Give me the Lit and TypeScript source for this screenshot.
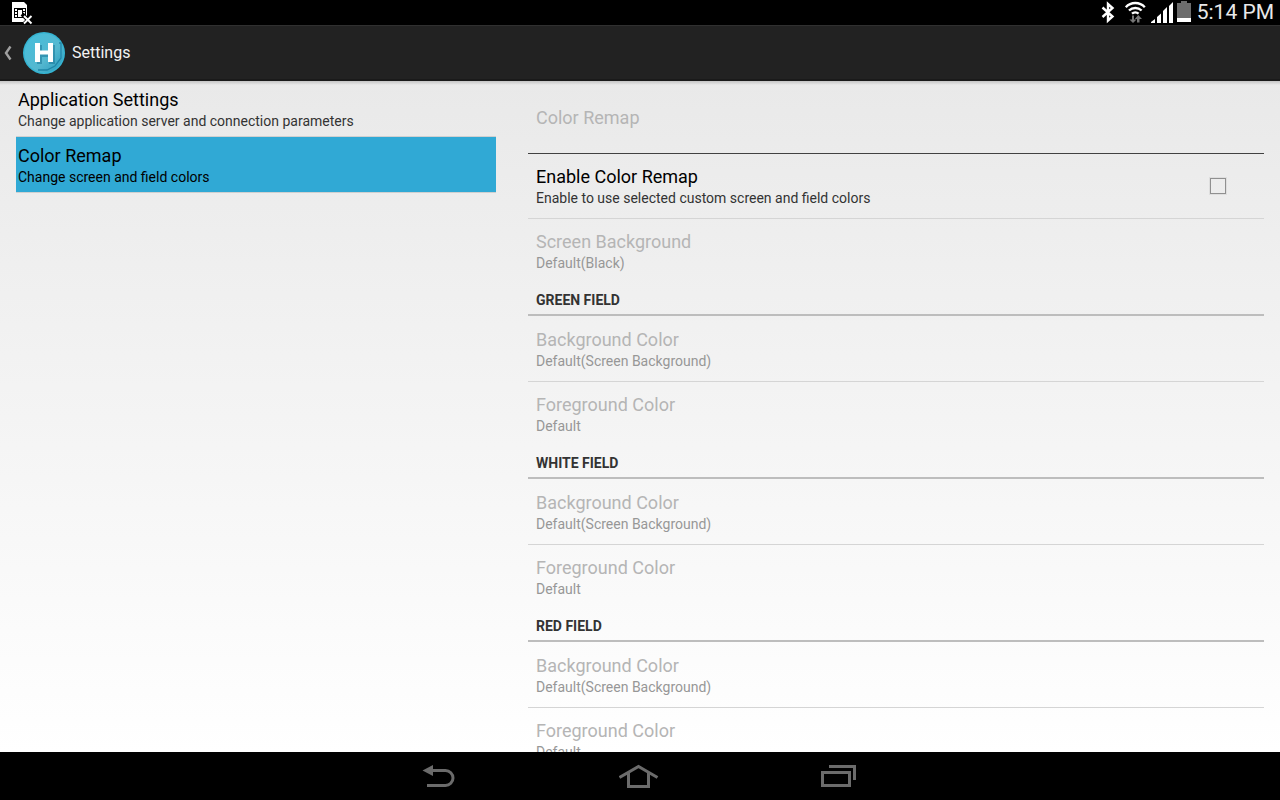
import { LitElement, html, css, svg } from "lit";
import { customElement, property, state } from "lit/decorators.js";
import { classMap } from "lit/directives/class-map.js";

const textStyles = css`
  :host {
    display: block;
    font-family: Roboto, sans-serif;
  }
  * {
    box-sizing: border-box;
  }
  button {
    margin: 0;
    padding: 0;
    border: 0;
    background: none;
    color: inherit;
    font: inherit;
    text-align: left;
  }
  .title {
    display: block;
    font-size: 18px;
    line-height: 22px;
    color: #000;
  }
  .summary {
    display: block;
    font-size: 14px;
    line-height: 20px;
    color: #333;
  }
`;

@customElement("status-bar")
class StatusBar extends LitElement {
  static styles = css`
    :host {
      display: flex;
      align-items: center;
      justify-content: space-between;
      height: 25px;
      padding: 0 6px 0 10px;
      background: #000;
      color: #e8e8e8;
      font-family: Roboto, sans-serif;
    }
    .tray {
      display: flex;
      align-items: center;
    }
    svg {
      display: block;
    }
    .clock {
      margin-left: 5px;
      font-size: 21px;
      line-height: 25px;
    }
  `;

  render() {
    return html`
      <svg width="24" height="25" viewBox="0 0 24 25" aria-label="No SIM card">
        <path d="M2 2h12l3 3v17H2z" fill="#fff" />
        <path d="M4 8h12v10H4z" fill="#000" />
        <path d="M5 9h2v2H5zM5 12h2v2H5zM5 15h2v2H5zM8 10h1v7H8zM11 10h1v7h-1zM9 10h2v7H9zM13 9h2v2h-2zM13 12h2v2h-2z" fill="#fff" />
        <path d="M12 14l11 11M24 14l-11 11" stroke="#000" stroke-width="4" />
        <path d="M14 16l7.500 7.500M21.500 16L14 23.500" stroke="#fff" stroke-width="1.900" />
      </svg>
      <div class="tray">
        <svg width="92" height="25" viewBox="0 0 92 25" aria-label="Bluetooth, Wi-Fi, signal, battery">
          <path d="M2.500 7.500l10 9-4.500 4V4l4.500 4-10 9" fill="none" stroke="#fff" stroke-width="2.400" />
          <g fill="none" stroke="#fff" stroke-width="2.400">
            <path d="M25.800 7.200a13 13 0 0 1 19 0" />
            <path d="M29 10.500a9 9 0 0 1 12.600 0" />
            <path d="M32 13.700a5 5 0 0 1 6.600 0" />
          </g>
          <path d="M32 15.500h2v4h2.500L33 23l-3.500-3.500H32zM37 22.500h2.500V19H42l-3.700-4-3.500 4H37z" fill="#777" />
          <path d="M51 23v-1l4-3v4zM57 23v-6l4-3.500V23zM63 23V11l4-4v16zM69 23V6l4-4v21z" fill="#fff" />
          <path d="M81 1h6v2h4v15H77V3h4z" fill="#6c6c6c" />
          <path d="M77 18h14v4H77z" fill="#fff" />
        </svg>
        <time class="clock">5:14 PM</time>
      </div>
    `;
  }
}

@customElement("action-bar")
class ActionBar extends LitElement {
  static styles = css`
    :host {
      display: block;
      box-sizing: border-box;
      height: 56px;
      background: #222;
      border-top: 1px solid #303030;
      border-bottom: 2px solid #1a1a1a;
      font-family: Roboto, sans-serif;
    }
    .up {
      display: flex;
      align-items: center;
      height: 100%;
      margin: 0;
      padding: 1px 8px 0 4px;
      border: 0;
      background: none;
      color: #f3f3f3;
      font: inherit;
    }
    .logo {
      margin: 0 6px 0 10px;
    }
    .name {
      margin: 0;
      font-size: 16px;
      line-height: 20px;
      font-weight: 400;
    }
  `;

  render() {
    return html`
      <button class="up" type="button">
        <svg width="8" height="16" viewBox="0 0 8 16" aria-hidden="true">
          <path d="M6.500 1.500L2 8l4.500 6.500" fill="none" stroke="#a0a0a0" stroke-width="2.400" />
        </svg>
        <svg class="logo" width="44" height="44" viewBox="0 0 44 44" aria-hidden="true">
          <defs>
            <linearGradient id="face" x1="0" y1="0" x2="1" y2="1">
              <stop offset="0" stop-color="#45bfdc" />
              <stop offset=".6" stop-color="#55b8d0" />
              <stop offset="1" stop-color="#2698bb" />
            </linearGradient>
          </defs>
          <circle cx="22" cy="22" r="21" fill="#35b4d2" />
          <circle cx="22" cy="22" r="19.500" fill="url(#face)" />
          <path d="M37 12h2v15l-6 8-8 4h-9" fill="none" stroke="#1f86a8" stroke-width="1.300" />
          <path d="M15 14h5v7h8v-7h5v19h-6v-7h-7v7h-5z" fill="#1c7798" opacity=".55" />
          <path d="M13 12h5v7.500h8V12h5v19h-5v-7.500h-8V31h-5z" fill="#fff" />
        </svg>
        <h1 class="name">Settings</h1>
      </button>
    `;
  }
}

@customElement("header-item")
class HeaderItem extends LitElement {
  @property() heading = "";
  @property() summary = "";
  @property({ type: Boolean }) active = false;

  static styles = [
    textStyles,
    css`
      .item {
        display: block;
        width: 100%;
        padding: 8px 2px 5px;
        border-bottom: 1px solid #d0d0d0;
      }
      .active {
        background: #30a9d5;
        background-clip: padding-box;
      }
      .active .summary {
        color: #000;
      }
    `,
  ];

  render() {
    return html`
      <button type="button" class=${classMap({ item: true, active: this.active })}>
        <span class="title">${this.heading}</span>
        <span class="summary">${this.summary}</span>
      </button>
    `;
  }
}

@customElement("preference-row")
class PreferenceRow extends LitElement {
  @property() heading = "";
  @property() summary = "";
  @property({ type: Boolean }) disabled = false;
  @property({ type: Boolean }) last = false;
  @property({ type: Boolean }) checkable = false;

  static styles = [
    textStyles,
    css`
      .row {
        display: flex;
        align-items: center;
        justify-content: space-between;
        width: 100%;
        padding: 12px 38px 10px 8px;
        border-bottom: 1px solid #d5d5d5;
      }
      .last {
        border-bottom: 0;
      }
      .disabled .title {
        color: #b5b5b5;
      }
      .disabled .summary {
        color: #979797;
      }
      .box {
        appearance: none;
        width: 16px;
        height: 16px;
        margin: 0 0 2px;
        border: 1px solid #909090;
        box-shadow: 0 0 0 1px #dedede;
      }
      .box:checked {
        background: #30a9d5;
      }
    `,
  ];

  render() {
    const text = html`
      <span>
        <span class="title">${this.heading}</span>
        <span class="summary">${this.summary}</span>
      </span>
    `;
    if (this.checkable) {
      return html`<label class="row">${text}<input class="box" type="checkbox" /></label>`;
    }
    return html`
      <button
        type="button"
        class=${classMap({ row: true, last: this.last, disabled: this.disabled })}
        ?disabled=${this.disabled}
      >
        ${text}
      </button>
    `;
  }
}

@customElement("navigation-bar")
class NavigationBar extends LitElement {
  static styles = css`
    :host {
      display: flex;
      justify-content: center;
      height: 48px;
      padding-right: 2px;
      background: #000;
    }
    button {
      display: flex;
      align-items: center;
      justify-content: center;
      width: 200px;
      padding: 0;
      border: 0;
      background: none;
    }
  `;

  render() {
    const icon = (shape: unknown) => html`
      <svg width="40" height="28" viewBox="0 0 40 28" fill="none" stroke="#6b6b6b" stroke-width="3" aria-hidden="true">
        ${shape}
      </svg>
    `;
    return html`
      <button type="button" aria-label="Back">
        ${icon(svg`
          <path d="M13 8.500h13.500a7.500 7.500 0 0 1 0 15H8" />
          <path d="M3.500 8.500L14 3v11z" fill="#6b6b6b" stroke="none" />
        `)}
      </button>
      <button type="button" aria-label="Home">
        ${icon(svg`<path d="M.5 15.500L19.500 4.500l19 11M9.500 11v13.500h20V11" />`)}
      </button>
      <button type="button" aria-label="Recent apps">
        ${icon(svg`<path d="M3.500 10.500h27v13h-27zM10 4.500h25.500V18" />`)}
      </button>
    `;
  }
}

@customElement("app-root")
class AppRoot extends LitElement {
  @state() private fields = ["Green Field", "White Field", "Red Field"];

  static styles = css`
    :host {
      display: flex;
      flex-direction: column;
      height: 100vh;
      overflow: hidden;
      font-family: Roboto, sans-serif;
    }
    status-bar,
    action-bar,
    navigation-bar {
      flex: none;
    }
    .content {
      flex: 1;
      min-height: 0;
      display: grid;
      grid-template-columns: calc(37.5% + 16px) minmax(0, 1fr);
      overflow: hidden;
      background: linear-gradient(#c4c4c4, rgba(232, 232, 232, 0) 4px), linear-gradient(#e9e9e9, #fff);
    }
    .headers {
      padding: 0 0 0 16px;
    }
    .details {
      padding: 0 16px 0 32px;
    }
    .page-title {
      margin: 0;
      padding: 26px 8px 24px;
      border-bottom: 1px solid #414141;
      font-size: 18px;
      line-height: 22px;
      font-weight: 400;
      color: #b5b5b5;
    }
    .category {
      margin: 0 0 1px;
      padding: 7px 8px 4px;
      border-bottom: 2px solid #bdbdbd;
      font-size: 14px;
      line-height: 20px;
      font-weight: 700;
      text-transform: uppercase;
      color: #333;
    }
  `;

  private renderField(name: string) {
    return html`
      <h3 class="category">${name}</h3>
      <preference-row heading="Background Color" summary="Default(Screen Background)" disabled></preference-row>
      <preference-row heading="Foreground Color" summary="Default" disabled last></preference-row>
    `;
  }

  render() {
    return html`
      <status-bar></status-bar>
      <action-bar></action-bar>
      <main class="content">
        <nav class="headers">
          <header-item
            heading="Application Settings"
            summary="Change application server and connection parameters"
          ></header-item>
          <header-item heading="Color Remap" summary="Change screen and field colors" active></header-item>
        </nav>
        <section class="details">
          <h2 class="page-title">Color Remap</h2>
          <preference-row
            heading="Enable Color Remap"
            summary="Enable to use selected custom screen and field colors"
            checkable
          ></preference-row>
          <preference-row heading="Screen Background" summary="Default(Black)" disabled last></preference-row>
          ${this.fields.map((name) => this.renderField(name))}
        </section>
      </main>
      <navigation-bar></navigation-bar>
    `;
  }
}
